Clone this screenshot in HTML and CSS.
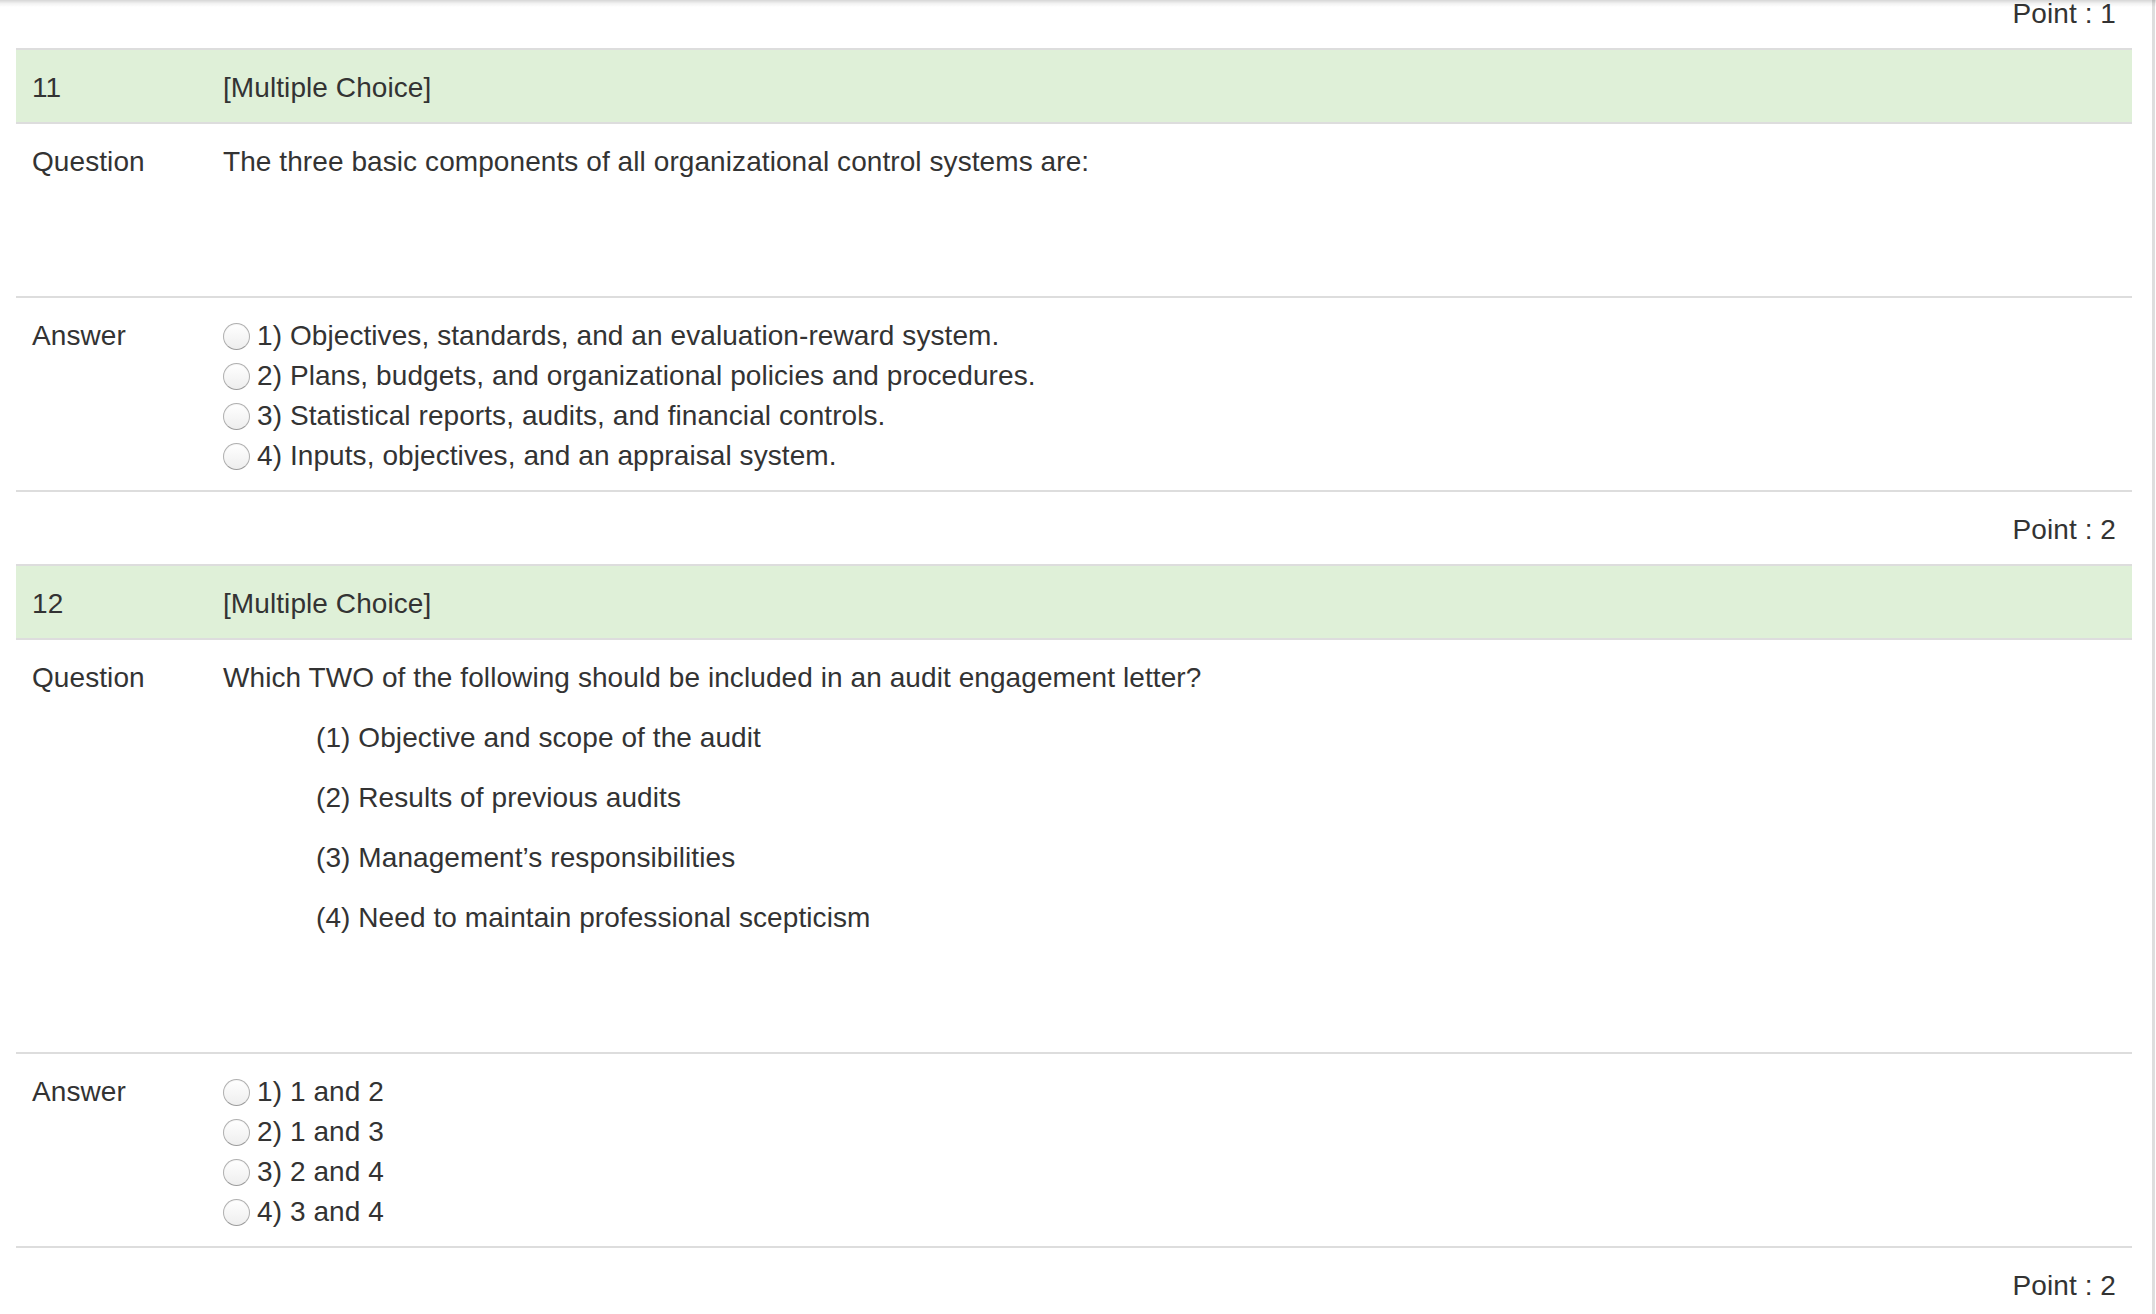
FILE: index.html
```html
<!DOCTYPE html>
<html lang="en">
<head>
<meta charset="utf-8">
<title>Quiz</title>
<link rel="stylesheet" href="styles.css">
</head>
<body>
<div class="page">
  <main class="content">
    <div class="points">Point : 1</div>
    <section class="question">
      <div class="row head">
        <div class="label">11</div>
        <div class="cell">[Multiple Choice]</div>
      </div>
      <div class="row">
        <div class="label">Question</div>
        <div class="cell body">
          <p>The three basic components of all organizational control systems are:</p>
          <div class="spacer"></div>
        </div>
      </div>
      <div class="row">
        <div class="label">Answer</div>
        <div class="cell options">
          <label class="option"><input type="radio" name="q11"><span>1) Objectives, standards, and an evaluation-reward system.</span></label>
          <label class="option"><input type="radio" name="q11"><span>2) Plans, budgets, and organizational policies and procedures.</span></label>
          <label class="option"><input type="radio" name="q11"><span>3) Statistical reports, audits, and financial controls.</span></label>
          <label class="option"><input type="radio" name="q11"><span>4) Inputs, objectives, and an appraisal system.</span></label>
        </div>
      </div>
    </section>
    <div class="points">Point : 2</div>
    <section class="question">
      <div class="row head">
        <div class="label">12</div>
        <div class="cell">[Multiple Choice]</div>
      </div>
      <div class="row">
        <div class="label">Question</div>
        <div class="cell body">
          <p>Which TWO of the following should be included in an audit engagement letter?</p>
          <p class="sub">(1) Objective and scope of the audit</p>
          <p class="sub">(2) Results of previous audits</p>
          <p class="sub">(3) Management’s responsibilities</p>
          <p class="sub">(4) Need to maintain professional scepticism</p>
          <div class="spacer"></div>
        </div>
      </div>
      <div class="row">
        <div class="label">Answer</div>
        <div class="cell options">
          <label class="option"><input type="radio" name="q12"><span>1) 1 and 2</span></label>
          <label class="option"><input type="radio" name="q12"><span>2) 1 and 3</span></label>
          <label class="option"><input type="radio" name="q12"><span>3) 2 and 4</span></label>
          <label class="option"><input type="radio" name="q12"><span>4) 3 and 4</span></label>
        </div>
      </div>
    </section>
    <div class="points">Point : 2</div>
  </main>
  <div class="edge"></div>
</div>
<div class="top-shadow"></div>
</body>
</html>
```

FILE: styles.css
```css
html, body {
  margin: 0;
  padding: 0;
  height: 100%;
  overflow: hidden;
  background: #fff;
}

body {
  font-family: "Helvetica Neue", Helvetica, "Liberation Sans", Arial, sans-serif;
  font-size: 28px;
  line-height: 40px;
  letter-spacing: 0.08px;
  color: #333;
}

.page {
  display: flex;
  height: 1314px;
  overflow: hidden;
}

.content {
  flex: 1;
  min-width: 0;
  padding: 0 20px 0 16px;
  margin-top: -24px;
}

.edge {
  width: 4px;
  box-sizing: border-box;
  border-left: 3px solid #dedede;
  background: #fff;
}

.points {
  text-align: right;
  padding: 18px 16px 14px;
}

.question {
  border-top: 2px solid #ddd;
  border-bottom: 2px solid #ddd;
}

.row {
  display: grid;
  grid-template-columns: 191px 1fr;
}

.row + .row {
  border-top: 2px solid #ddd;
}

.row.head {
  background: #dff0d8;
}

.label,
.cell {
  padding: 18px 16px 14px;
}

.body p {
  margin: 0 0 20px;
}

.body p.sub {
  padding-left: 93px;
}

.spacer {
  height: 80px;
}

.option {
  display: flex;
  align-items: flex-start;
}

.option input {
  -webkit-appearance: none;
  appearance: none;
  flex: none;
  width: 27px;
  height: 27px;
  margin: 7px 7px 0 0;
  border-radius: 50%;
  box-sizing: border-box;
  border: 1.5px solid #b0b0b0;
  border-bottom-color: #9c9c9c;
  background: linear-gradient(#ffffff, #eeeeee);
  box-shadow: inset 0 1px 1px rgba(0, 0, 0, 0.04);
}

.top-shadow {
  position: absolute;
  top: 0;
  left: 0;
  right: 0;
  height: 7px;
  background: linear-gradient(rgba(0, 0, 0, 0.16), rgba(0, 0, 0, 0.05) 50%, rgba(0, 0, 0, 0));
  pointer-events: none;
}
```
